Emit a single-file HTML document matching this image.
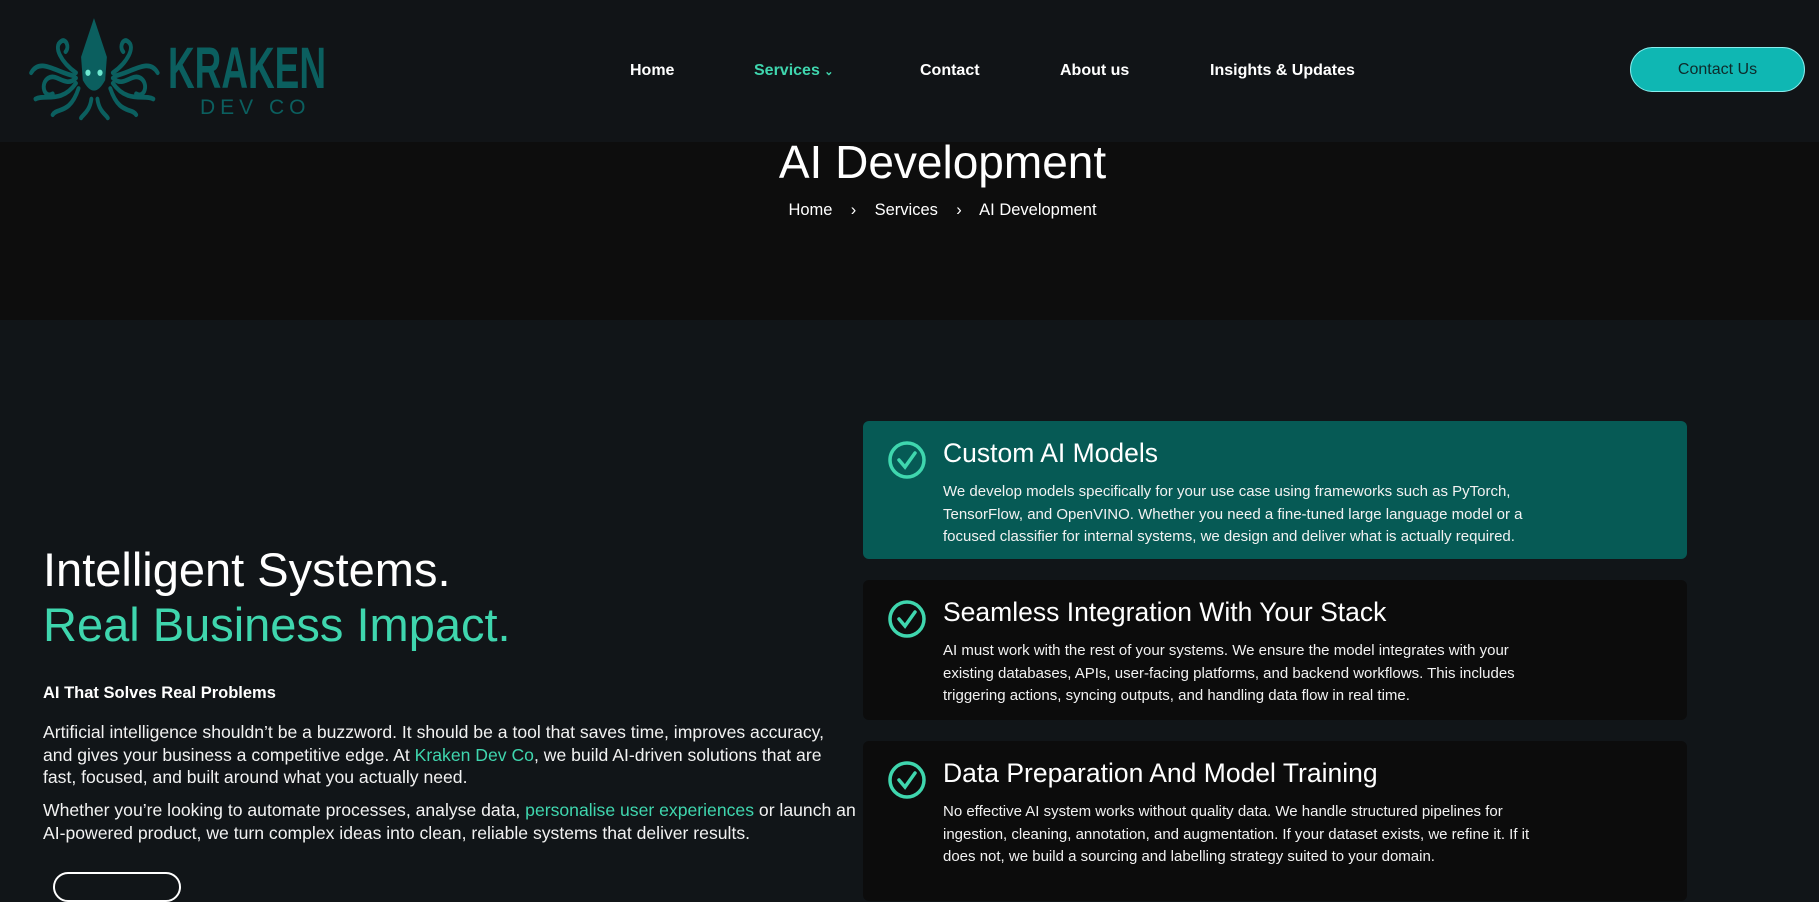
<!DOCTYPE html>
<html><head><meta charset="utf-8"><style>
*{margin:0;padding:0;box-sizing:border-box}
body{width:1819px;height:876px;overflow:hidden;background:#111518;font-family:"Liberation Sans",sans-serif;color:#fff;position:relative}
.hdr{position:absolute;left:0;top:0;width:1819px;height:142px;background:#111417}
.nav a{position:absolute;top:62px;font-size:16px;font-weight:bold;color:#fff;text-decoration:none}
.btn{position:absolute;left:1630px;top:47px;width:175px;height:45px;border-radius:23px;background:#0fb7b3;border:1px solid #8ee;color:#0e2a2a;font-size:16px;text-align:center;line-height:43px}
.hero{position:absolute;left:0;top:142px;width:1819px;height:178px;background:#0d0d0d;text-align:center}
.left{position:absolute;left:43px}
.card{position:absolute;left:863px;width:824px;border-radius:6px;background:#0c0c0c}
.card .ck{position:absolute;left:24px;top:19px}
.card h3{position:absolute;left:80px;top:17px;font-weight:normal;font-size:26.5px;white-space:nowrap}
.card p{position:absolute;left:80px;top:60px;font-size:15px;line-height:22.5px;white-space:nowrap;color:#f2f2f2}
.ts{color:#3fd6ae}
</style></head><body>
<div class="hdr">
<svg style="position:absolute;left:28px;top:14px" width="310" height="110" viewBox="0 0 310 110">
<g transform="translate(-14,1) scale(0.86,1.05)">
<g fill="none" stroke="#0b5f5f" stroke-width="4.5" stroke-linecap="round">
<path d="M72 60 C60 70 50 55 40 60 C30 65 35 80 45 75"/><path d="M72 65 C55 85 35 75 25 80"/><path d="M75 70 C65 95 50 88 45 95"/>
<path d="M72 55 C55 45 45 30 55 25 C60 22 65 30 60 35"/><path d="M70 58 C50 55 30 40 20 55"/>
<path d="M115 60 C127 70 137 55 147 60 C157 65 152 80 142 75"/><path d="M115 65 C132 85 152 75 162 80"/><path d="M112 70 C122 95 137 88 142 95"/>
<path d="M115 55 C132 45 142 30 132 25 C127 22 122 30 127 35"/><path d="M117 58 C137 55 157 40 167 55"/>
<path d="M90 80 C88 92 80 95 78 98"/><path d="M97 80 C99 92 107 95 109 98"/>
</g>
<path d="M93 3 L78 40 L80 62 Q93 82 106 62 L108 40 Z" fill="#0b5f5f"/>
<circle cx="86" cy="55" r="3" fill="#6fe8d0"/><circle cx="100" cy="55" r="3" fill="#6fe8d0"/>
</g>
<text x="140" y="74" font-family="Liberation Sans" font-weight="bold" font-size="58" fill="#0b5f5f" textLength="158" lengthAdjust="spacingAndGlyphs">KRAKEN</text>
<text x="172" y="100" font-family="Liberation Sans" font-size="21" fill="#0b5f5f" letter-spacing="5">DEV CO</text>
</svg>
<div class="nav">
<a style="left:630px">Home</a>
<a style="left:754px;color:#3fd6ae">Services <span style="font-size:11px">&#8964;</span></a>
<a style="left:920px">Contact</a>
<a style="left:1060px">About us</a>
<a style="left:1210px">Insights &amp; Updates</a>
</div>
<div class="btn">Contact Us</div>
</div>
<div class="hero" style="padding-left:66px">
<div style="position:absolute;left:66px;right:0;top:-6px;font-size:46px;line-height:52px">AI Development</div>
<div style="position:absolute;left:66px;right:0;top:59px;font-size:16.5px">Home &nbsp;&nbsp;&nbsp;›&nbsp;&nbsp;&nbsp; Services &nbsp;&nbsp;&nbsp;›&nbsp;&nbsp;&nbsp; AI Development</div>
</div>
<div class="left" style="top:542px;font-size:47px;line-height:55px;white-space:nowrap">Intelligent Systems.<br><span class="ts">Real Business Impact.</span></div>
<div class="left" style="top:684px;font-size:16.5px;font-weight:bold">AI That Solves Real Problems</div>
<div class="left" style="top:721px;font-size:17.6px;line-height:22.5px;white-space:nowrap;color:#f2f2f2">Artificial intelligence shouldn’t be a buzzword. It should be a tool that saves time, improves accuracy,<br>and gives your business a competitive edge. At <span class="ts">Kraken Dev Co</span>, we build AI-driven solutions that are<br>fast, focused, and built around what you actually need.</div>
<div class="left" style="top:799px;font-size:17.6px;line-height:22.5px;white-space:nowrap;color:#f2f2f2">Whether you’re looking to automate processes, analyse data, <span class="ts">personalise user experiences</span> or launch an<br>AI-powered product, we turn complex ideas into clean, reliable systems that deliver results.</div>
<div style="position:absolute;left:53px;top:872px;width:128px;height:30px;border:2px solid #fff;border-radius:15px"></div>

<div class="card" style="top:421px;height:138px;background:#065a55">
<svg class="ck" width="40" height="40" viewBox="0 0 40 40"><circle cx="20" cy="20" r="17" fill="none" stroke="#3fd6ae" stroke-width="3.5"/><path d="M12 20 L18 27 L28 13" fill="none" stroke="#3fd6ae" stroke-width="3.5" stroke-linecap="round"/></svg>
<h3>Custom AI Models</h3>
<p>We develop models specifically for your use case using frameworks such as PyTorch,<br>TensorFlow, and OpenVINO. Whether you need a fine-tuned large language model or a<br>focused classifier for internal systems, we design and deliver what is actually required.</p>
</div>
<div class="card" style="top:580px;height:140px">
<svg class="ck" width="40" height="40" viewBox="0 0 40 40"><circle cx="20" cy="20" r="17" fill="none" stroke="#3fd6ae" stroke-width="3.5"/><path d="M12 20 L18 27 L28 13" fill="none" stroke="#3fd6ae" stroke-width="3.5" stroke-linecap="round"/></svg>
<h3>Seamless Integration With Your Stack</h3>
<p>AI must work with the rest of your systems. We ensure the model integrates with your<br>existing databases, APIs, user-facing platforms, and backend workflows. This includes<br>triggering actions, syncing outputs, and handling data flow in real time.</p>
</div>
<div class="card" style="top:741px;height:160px">
<svg class="ck" width="40" height="40" viewBox="0 0 40 40"><circle cx="20" cy="20" r="17" fill="none" stroke="#3fd6ae" stroke-width="3.5"/><path d="M12 20 L18 27 L28 13" fill="none" stroke="#3fd6ae" stroke-width="3.5" stroke-linecap="round"/></svg>
<h3>Data Preparation And Model Training</h3>
<p>No effective AI system works without quality data. We handle structured pipelines for<br>ingestion, cleaning, annotation, and augmentation. If your dataset exists, we refine it. If it<br>does not, we build a sourcing and labelling strategy suited to your domain.</p>
</div>
</body></html>
